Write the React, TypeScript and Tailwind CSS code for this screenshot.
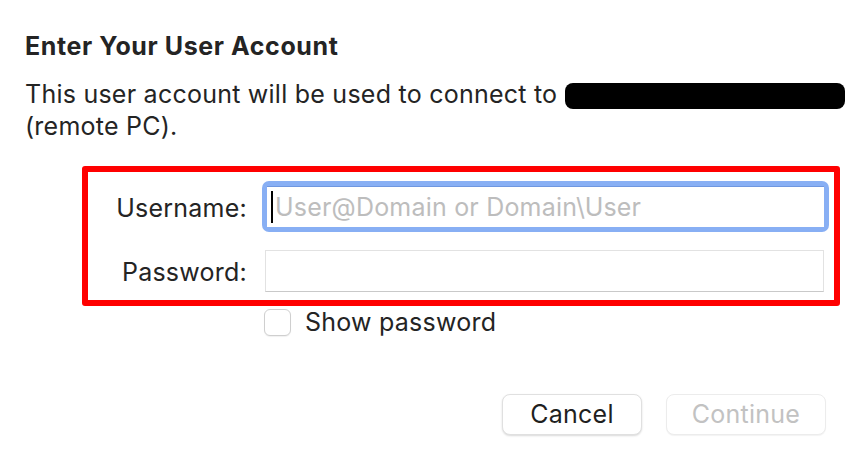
import React from "react";

export default function App() {
  return (
    <div
      className="w-[856px] h-[464px] bg-white text-[#242424] overflow-hidden"
      style={{ fontFamily: "Inter, 'Liberation Sans', sans-serif" }}
    >
      <div className="pl-[25px] pt-[31px]">
        <div className="text-[25px] leading-[30px] font-bold tracking-[0.6px]">Enter Your User Account</div>
        <div className="mt-[17px] text-[25px] leading-[32px] tracking-[0.24px] w-[828px] whitespace-nowrap">
          <span>This user account will be used to connect to </span>
          <span className="inline-block align-middle w-[280px] h-[26px] bg-black rounded-[8px]" />
          <br />
          <span>(remote PC).</span>
        </div>
        <div className="ml-[57px] mt-[24px] w-[758px] h-[140px] border-[6px] border-[#ff0000] rounded-[3px]">
          <div className="mt-[9px] flex items-center">
            <div className="w-[159px] text-right text-[25px] tracking-[0.24px] leading-[30px] pt-[3px]">Username:</div>
            <div className="ml-[15px] w-[567px] h-[51px] rounded-[7px] bg-[#88aff4] p-[5px]">
              <div className="w-full h-full bg-white border-t border-[#6f97e0] flex items-center pl-[4px]">
                <span className="w-[2px] h-[32px] bg-black" />
                <span className="ml-[2px] text-[25px] tracking-[0.2px] text-[#bdbdbd] leading-[30px]">User@Domain or Domain\User</span>
              </div>
            </div>
          </div>
          <div className="mt-[18px] flex items-center">
            <div className="w-[159px] text-right text-[25px] tracking-[0.24px] leading-[30px] pt-[1px]">Password:</div>
            <div className="ml-[18px] w-[559px] h-[42px] bg-white border border-[#e2e2e2] border-b-[#c9c9c9]" />
          </div>
        </div>
        <div className="ml-[239px] mt-[1px] flex items-center">
          <div className="w-[27px] h-[27px] rounded-[6px] border border-[#cfcfcf] bg-white shadow-[0_1px_1px_rgba(0,0,0,0.06)]" />
          <span className="ml-[14px] text-[25px] tracking-[0.24px] leading-[30px]">Show password</span>
        </div>
      </div>
      <div className="mt-[57px] flex justify-end gap-[24px] pr-[30px]">
        <button className="w-[140px] h-[41px] rounded-[8px] bg-white border border-[#e0e0e0] shadow-[0_1px_2px_rgba(0,0,0,0.15)] text-[25px] tracking-[0.24px] text-[#1f1f1f]">
          Cancel
        </button>
        <button className="w-[160px] h-[41px] rounded-[8px] bg-white border border-[#ececec] shadow-[0_1px_1px_rgba(0,0,0,0.05)] text-[25px] tracking-[0.24px] text-[#c2c2c2]">
          Continue
        </button>
      </div>
    </div>
  );
}
